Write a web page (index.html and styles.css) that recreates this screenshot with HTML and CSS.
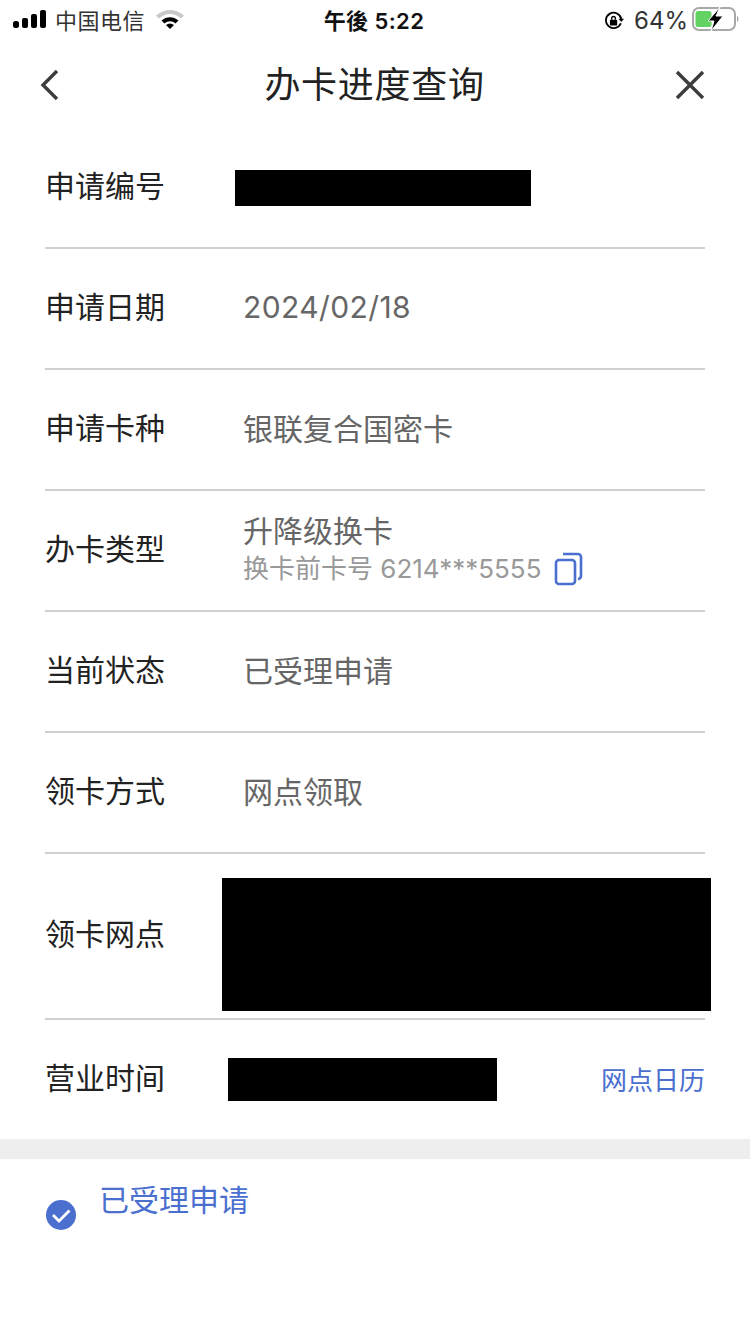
FILE: index.html
```html
<!DOCTYPE html>
<html lang="zh-CN">
<head>
  <meta charset="UTF-8">
  <title>办卡进度查询</title>
  <link rel="stylesheet" href="styles.css">
</head>
<body>

  <div class="statusbar">
    <div class="status-left">
      <svg width="36" height="20" viewBox="0 0 36 20"><rect x="0" y="12" width="6" height="7" rx="2.500" fill="#000"/><rect x="9" y="9" width="6" height="10" rx="2" fill="#000"/><rect x="18" y="5" width="6" height="14" rx="2" fill="#000"/><rect x="27" y="1" width="6" height="18" rx="2" fill="#000"/></svg>
      <span class="carrier">中国电信</span>
      <svg class="wifi" width="30" height="22" viewBox="0 0 30 22"><path d="M1 7.500C9 0 21 0 29 7.500L26 10.500C19.500 4.500 10.500 4.500 4 10.500Z" fill="#c8c8c8"/><path d="M6.500 12.500C11.500 8 18.500 8 23.500 12.500L20.500 15.500C17 12.500 13 12.500 9.500 15.500Z" fill="#000"/><path d="M11 17C13.500 15 16.500 15 19 17L15 21Z" fill="#000"/></svg>
    </div>
    <div class="status-time">午後 5:22</div>
    <div class="status-right">
      <svg class="lock" width="20" height="20" viewBox="0 0 22 22"><path d="M18.500 13.500A8.500 8.500 0 1 1 19 9" fill="none" stroke="#000" stroke-width="2"/><path d="M16 8.500h6l-3 3.500z" fill="#000"/><rect x="6.500" y="9.500" width="8" height="6.500" rx="1" fill="#000"/><path d="M8.500 9.500V8a2 2 0 0 1 4 0v1.500" fill="none" stroke="#000" stroke-width="1.500"/></svg>
      <span class="battery-text">64%</span>
      <svg width="48" height="24" viewBox="0 0 48 24"><rect x="1" y="1" width="42" height="22" rx="6" fill="none" stroke="#a8a8a8" stroke-width="2"/><rect x="3.500" y="4" width="16" height="16" rx="2.500" fill="#62d262"/><path d="M45 9c2 .5 2 5.500 0 6z" fill="#a8a8a8"/><path d="M28 0 16 14h6l-3 10 12-15h-7z" fill="#000" stroke="#fff" stroke-width="1"/></svg>
    </div>
  </div>

  <div class="navbar">
    <svg class="nav-icon" width="24" height="34" viewBox="0 0 24 34"><path d="M20 3 6 17l14 14" fill="none" stroke="#3c3c3c" stroke-width="3.400"/></svg>
    <div class="nav-title">办卡进度查询</div>
    <svg class="nav-icon" width="34" height="34" viewBox="0 0 34 34"><path d="M4 4l26 26M30 4 4 30" fill="none" stroke="#3c3c3c" stroke-width="3.400"/></svg>
  </div>

  <div class="rows">
    <div class="row">
      <div class="label">申请编号</div>
      <div class="redact redact-no"></div>
    </div>
    <div class="row">
      <div class="label">申请日期</div>
      <div class="value value-date">2024/02/18</div>
    </div>
    <div class="row">
      <div class="label">申请卡种</div>
      <div class="value">银联复合国密卡</div>
    </div>
    <div class="row">
      <div class="label">办卡类型</div>
      <div class="value value-stack">
        <div class="value-main">升降级换卡</div>
        <div class="value-sub">
          换卡前卡号 6214***5555
          <svg class="copy" width="30" height="34" viewBox="0 0 30 34"><rect x="2" y="8" width="19" height="24" rx="3" fill="none" stroke="#4a6fcf" stroke-width="2.600"/><path d="M9 2h15a3 3 0 0 1 3 3v19a3 3 0 0 1-3 3" fill="none" stroke="#4a6fcf" stroke-width="2.600"/></svg>
        </div>
      </div>
    </div>
    <div class="row">
      <div class="label">当前状态</div>
      <div class="value">已受理申请</div>
    </div>
    <div class="row">
      <div class="label">领卡方式</div>
      <div class="value">网点领取</div>
    </div>
    <div class="row row-branch">
      <div class="label">领卡网点</div>
      <div class="redact redact-branch"></div>
    </div>
    <div class="row row-hours">
      <div class="label">营业时间</div>
      <div class="redact redact-hours"></div>
      <div class="link">网点日历</div>
    </div>
  </div>

  <div class="divider"></div>

  <div class="progress">
    <svg class="check" width="30" height="30" viewBox="0 0 30 30"><circle cx="15" cy="15" r="15" fill="#4a6fcf"/><path d="M7 15l6 6 10.500-10.500" fill="none" stroke="#fff" stroke-width="2.800"/></svg>
    <div class="progress-text">已受理申请</div>
  </div>

</body>
</html>
```

FILE: styles.css
```css
* {
  box-sizing: border-box;
}
body {
  margin: 0;
  background: #ffffff;
  font-family: Inter, "Noto Sans CJK SC", sans-serif;
  color: #222222;
}
.statusbar {
  height: 42px;
  display: flex;
  align-items: center;
  justify-content: space-between;
  padding: 0 10px 4px 13px;
  font-size: 22px;
}
.status-left {
  width: 235px;
  display: flex;
  align-items: center;
}
.status-right {
  width: 240px;
  display: flex;
  align-items: center;
  justify-content: flex-end;
}
.carrier {
  margin-left: 6px;
  letter-spacing: 0.5px;
  color: #333333;
}
.wifi {
  margin-left: 10px;
}
.status-time {
  font-weight: 600;
  letter-spacing: 0.4px;
  color: #111111;
}
.lock {
  margin-top: 3px;
}
.battery-text {
  margin: 3px 4px 0 10px;
  font-size: 24px;
  color: #333333;
}
.navbar {
  height: 85px;
  margin-bottom: 1px;
  display: flex;
  align-items: center;
  justify-content: space-between;
  padding: 0 43px 0 37px;
}
.nav-title {
  margin-left: 15px;
  padding-bottom: 6px;
  font-size: 36px;
  letter-spacing: 0.7px;
  color: #222222;
}
.rows {
  padding: 0 45px;
}
.row {
  height: 121px;
  display: flex;
  align-items: center;
  padding-bottom: 6px;
  border-bottom: 2px solid #d0d0d0;
  font-size: 30px;
}
.row-branch {
  height: 166px;
}
.row-hours {
  height: 119px;
  border-bottom: none;
}
.label {
  width: 198px;
  flex-shrink: 0;
  margin-bottom: 2px;
  color: #222222;
}
.value {
  color: #666666;
}
.value-date {
  margin-top: 3px;
  letter-spacing: 0.4px;
}
.value-stack {
  margin-top: 7px;
}
.value-main {
  line-height: 36px;
}
.value-sub {
  display: flex;
  align-items: center;
  font-size: 26px;
  line-height: 40px;
  color: #999999;
}
.copy {
  margin-left: 13px;
}
.redact {
  background: #000000;
  flex-shrink: 0;
}
.redact-no {
  width: 296px;
  height: 36px;
  margin: 6px 0 0 -8px;
}
.redact-branch {
  width: 489px;
  height: 133px;
  margin: 22px -6px 0 -21px;
}
.redact-hours {
  width: 269px;
  height: 43px;
  margin: 6px 0 0 -15px;
}
.link {
  margin: 3px 0 0 auto;
  font-size: 26px;
  color: #4a6fcf;
}
.divider {
  height: 20px;
  background: #eeeeee;
}
.progress {
  display: flex;
  align-items: flex-start;
  padding: 17px 46px 0;
}
.check {
  margin-top: 24px;
}
.progress-text {
  margin-left: 23px;
  font-size: 30px;
  color: #4a6fcf;
}
```
